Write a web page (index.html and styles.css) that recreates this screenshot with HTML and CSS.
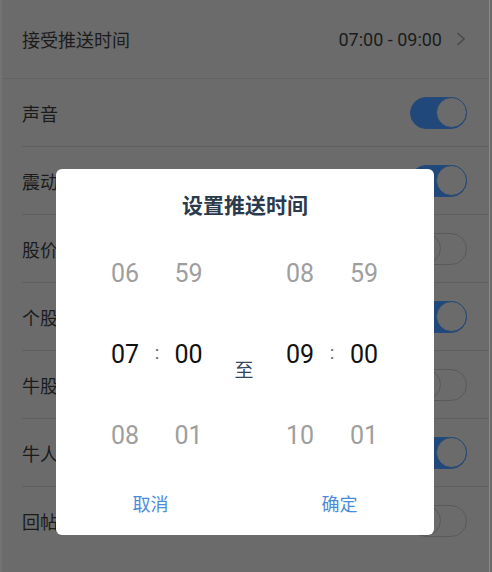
FILE: index.html
```html
<!DOCTYPE html>
<html lang="zh">
<head>
<meta charset="utf-8">
<title>推送设置</title>
<link rel="stylesheet" href="styles.css">
</head>
<body>
<div class="screen">
  <div class="row row-first">
    <span class="label">接受推送时间</span>
    <span class="value">07:00 - 09:00</span>
    <svg class="chev" width="10" height="14" viewBox="0 0 10 14"><polyline points="1.5,1 8,7 1.5,13" fill="none" stroke="#4a4a4a" stroke-width="1.6"/></svg>
  </div>
  <div class="row"><span class="label">声音</span><span class="toggle on"><i></i></span></div>
  <div class="row"><span class="label">震动</span><span class="toggle on"><i></i></span></div>
  <div class="row"><span class="label">股价</span><span class="toggle"><i></i></span></div>
  <div class="row"><span class="label">个股</span><span class="toggle on"><i></i></span></div>
  <div class="row"><span class="label">牛股</span><span class="toggle"><i></i></span></div>
  <div class="row"><span class="label">牛人</span><span class="toggle on"><i></i></span></div>
  <div class="row row-last"><span class="label">回帖</span><span class="toggle"><i></i></span></div>

  <div class="overlay">
    <div class="dialog">
      <div class="title">设置推送时间</div>
      <div class="picker">
        <span class="cell dim">06</span><span class="cell"></span><span class="cell dim">59</span>
        <span class="zhi">至</span>
        <span class="cell dim">08</span><span class="cell"></span><span class="cell dim">59</span>

        <span class="cell sel">07</span><span class="cell colon">:</span><span class="cell sel">00</span>
        <span class="cell sel">09</span><span class="cell colon">:</span><span class="cell sel">00</span>

        <span class="cell dim">08</span><span class="cell"></span><span class="cell dim">01</span>
        <span class="cell dim">10</span><span class="cell"></span><span class="cell dim">01</span>
      </div>
      <div class="actions">
        <span class="btn">取消</span>
        <span class="btn">确定</span>
      </div>
    </div>
  </div>
</div>
</body>
</html>
```
FILE: styles.css
```css
html, body {
  margin: 0;
  padding: 0;
  background: #6b6b6b;
}
body {
  font-family: Roboto, "Noto Sans CJK SC", sans-serif;
  width: 492px;
  height: 572px;
  overflow: hidden;
}
.screen {
  position: relative;
  height: 572px;
  margin-right: 2px;
  border-left: 2px solid #737373;
  border-right: 1px solid #888888;
  background: #6b6b6b;
}
.row {
  display: flex;
  align-items: center;
  height: 67px;
  margin-left: 20px;
  padding-right: 22px;
  border-bottom: 1px solid #5f5f5f;
}
.row-last {
  border-bottom: none;
}
.row-first {
  height: 78px;
  margin-left: 0;
  padding-left: 20px;
  padding-right: 23px;
  border-bottom: 1px solid #636363;
}
.label {
  flex: 1;
  font-family: "Noto Sans CJK SC", sans-serif;
  font-size: 18px;
  color: #1b1b1b;
}
.value {
  font-family: Roboto, sans-serif;
  font-size: 18px;
  color: #1b1b1b;
  margin-right: 14px;
}
.chev {
  display: block;
}
.toggle {
  box-sizing: border-box;
  width: 57px;
  height: 32px;
  border-radius: 16px;
  border: 1.5px solid #5a5a5a;
  display: flex;
  align-items: center;
  justify-content: flex-start;
}
.toggle i {
  box-sizing: border-box;
  display: block;
  width: 31px;
  height: 31px;
  margin: -1px;
  border-radius: 50%;
  border: 1.5px solid #5a5a5a;
  background: #6b6b6b;
}
.toggle.on {
  background: #21487a;
  border-color: #244a7a;
  justify-content: flex-end;
}
.toggle.on i {
  border-color: #284a76;
}
.overlay {
  position: absolute;
  inset: 0;
  padding-top: 169px;
  padding-left: 54px;
}
.dialog {
  width: 378px;
  height: 366px;
  box-sizing: border-box;
  background: #ffffff;
  border-radius: 6px;
  padding-top: 22px;
  display: flex;
  flex-direction: column;
}
.title {
  text-align: center;
  font-family: "Noto Sans CJK SC", sans-serif;
  font-weight: 700;
  font-size: 21px;
  line-height: 26px;
  color: #2b3a4d;
}
.picker {
  margin-top: 16px;
  padding-left: 44px;
  display: grid;
  grid-template-columns: 50px 14px 49px 62px 50px 14px 50px;
  grid-template-rows: 81px 81px 81px;
}
.cell {
  text-align: center;
  line-height: 81px;
  font-size: 25px;
}
.dim {
  color: #9e9e9e;
}
.sel {
  color: #111111;
}
.colon {
  font-size: 19px;
  color: #666666;
  line-height: 78px;
}
.zhi {
  grid-column: 4;
  grid-row: 1 / 4;
  align-self: center;
  text-align: center;
  margin-top: 28px;
  font-family: "Noto Sans CJK SC", sans-serif;
  font-size: 19px;
  color: #34465a;
}
.actions {
  display: flex;
  height: 54px;
}
.btn {
  flex: 1;
  display: flex;
  align-items: center;
  justify-content: center;
  font-family: "Noto Sans CJK SC", sans-serif;
  font-size: 18px;
  color: #4a8cdb;
}
```
